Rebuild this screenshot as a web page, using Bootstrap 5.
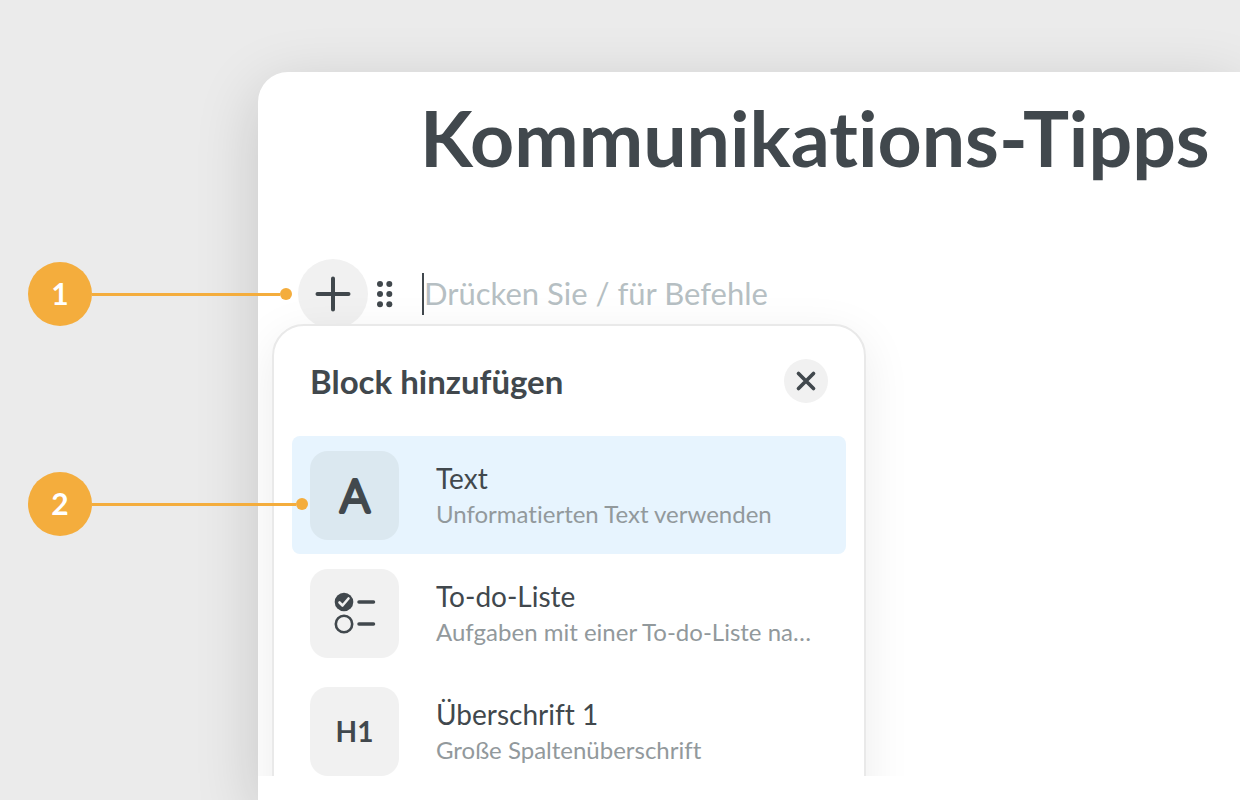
<!DOCTYPE html>
<html lang="de">
<head>
<meta charset="utf-8">
<meta name="viewport" content="width=device-width, initial-scale=1">
<title>Kommunikations-Tipps</title>
<link href="https://cdn.jsdelivr.net/npm/bootstrap@5.3.0/dist/css/bootstrap.min.css" rel="stylesheet">
<style>
  :root { --ink: #41484d; --muted: #92999c; --soft: #f1f1f1; --accent: #f4ad3d; }
  body { background: #ebebeb; color: var(--ink); font-family: Lato, "Liberation Sans", sans-serif; }
  body, button, input { font-variant-ligatures: none; }
  .stage { min-height: 100vh; padding: 72px 0 0 258px; }
  .sheet { min-height: calc(100vh - 72px); border-radius: 30px 0 0 0; box-shadow: 0 16px 64px rgba(0, 0, 0, .16); }
  .editor { height: calc(100vh - 96px); padding-top: 19px; border-radius: 30px 0 0 0; }
  .doc-title { font-size: 77px; line-height: 92px; padding-left: 162px; margin-bottom: 76px; }
  .block-row { padding-left: 40px; }
  .round-btn { border: 0; background: var(--soft); color: var(--ink); }
  .add-btn { width: 70px; height: 70px; }
  .drag-btn { border: 0; background: none; color: var(--ink); width: 34px; height: 36px; }
  .block-input { height: 42px; margin-left: 20px; padding: 0 0 3px; border: 0; border-left: 2px solid var(--ink); outline: 0; background: none; font-size: 31px; line-height: 38px; }
  .block-input::placeholder { color: #b6bfc3; opacity: 1; }
  .block-menu { top: 65px; left: 14px; width: 594px; padding: 33px 18px; border: 2px solid #e9e9e9; border-radius: 32px; box-shadow: 0 12px 48px rgba(0, 0, 0, .08); }
  .menu-head { padding: 0 18px; margin-bottom: 33px; }
  .menu-title { font-size: 33px; line-height: 44px; }
  .close-btn { width: 44px; height: 44px; }
  .menu-item { height: 118px; padding: 0 18px; gap: 37px; border: 0; border-radius: 8px; background: none; color: var(--ink); }
  .menu-item.current { background: #e7f4fe; }
  .tile { width: 89px; height: 89px; border-radius: 18px; background: var(--soft); font-size: 28px; font-weight: 700; }
  .current .tile { background: #dbe8f0; }
  .item-text { padding-top: 2px; }
  .item-name { font-size: 28px; line-height: 36px; }
  .item-note { font-size: 24px; line-height: 36px; color: var(--muted); }
  .callout { left: 28px; }
  .callout-add { top: 262px; width: 264px; }
  .callout-text { top: 472px; width: 280px; }
  .callout-number { width: 64px; height: 64px; padding-bottom: 2px; background: var(--accent); font-size: 30px; }
  .callout-line { height: 3px; background: var(--accent); }
  .callout-dot { width: 12px; height: 12px; background: var(--accent); }
</style>
</head>
<body>
<div class="stage position-relative overflow-hidden">
  <main class="sheet bg-white">
    <div class="editor overflow-hidden">
      <h1 class="doc-title fw-bold text-nowrap">Kommunikations-Tipps</h1>
      <div class="block-row d-flex align-items-center position-relative">
        <button type="button" class="round-btn add-btn rounded-circle p-0 flex-shrink-0 d-flex align-items-center justify-content-center" aria-label="Block hinzufügen">
          <svg width="36" height="36" viewBox="0 0 36 36" fill="none" stroke="currentColor" stroke-width="4" stroke-linecap="round"><path d="M18 2.5v31M2.5 18h31"/></svg>
        </button>
        <button type="button" class="drag-btn p-0 flex-shrink-0 d-flex align-items-center justify-content-center" aria-label="Block verschieben">
          <svg width="18" height="28" viewBox="0 0 18 28" fill="currentColor"><circle cx="4" cy="4" r="3"/><circle cx="13.300" cy="4" r="3"/><circle cx="4" cy="14" r="3"/><circle cx="13.300" cy="14" r="3"/><circle cx="4" cy="24.300" r="3"/><circle cx="13.300" cy="24.300" r="3"/></svg>
        </button>
        <input type="text" class="block-input flex-grow-1" placeholder="Drücken Sie / für Befehle" aria-label="Blocktext">
        <section class="block-menu position-absolute bg-white" aria-labelledby="menuTitle">
          <div class="menu-head d-flex align-items-center justify-content-between">
            <h2 id="menuTitle" class="menu-title fw-bold mb-0">Block hinzufügen</h2>
            <button type="button" class="round-btn close-btn rounded-circle p-0 d-flex align-items-center justify-content-center" aria-label="Schließen">
              <svg width="22" height="22" viewBox="0 0 22 22" fill="none" stroke="currentColor" stroke-width="3.700" stroke-linecap="round"><path d="M3.500 3.500l15 15M18.500 3.500l-15 15"/></svg>
            </button>
          </div>
          <ul class="list-unstyled mb-0">
            <li><button type="button" class="menu-item current w-100 d-flex align-items-center text-start">
              <span class="tile flex-shrink-0 d-flex align-items-center justify-content-center">
                <svg width="60" height="72" viewBox="0 0 60 72" fill="currentColor" stroke="currentColor" stroke-width="4" stroke-linejoin="round" font-size="45" font-weight="300"><text x="30" y="53" text-anchor="middle">A</text></svg>
              </span>
              <span class="item-text"><span class="item-name d-block">Text</span><span class="item-note d-block text-nowrap">Unformatierten Text verwenden</span></span>
            </button></li>
            <li><button type="button" class="menu-item w-100 d-flex align-items-center text-start">
              <span class="tile flex-shrink-0 d-flex align-items-center justify-content-center">
                <svg width="42" height="42" viewBox="0 0 42 42" fill="none" stroke="currentColor" stroke-width="3.500" stroke-linecap="round" stroke-linejoin="round"><circle cx="10" cy="10" r="9.300" fill="currentColor" stroke="none"/><path d="M5.500 10.500l3 3 6-7" stroke="#f1f1f1" stroke-width="2.600"/><circle cx="10" cy="32" r="8.200" stroke-width="2.600"/><path d="M25 10h14.500M25 32h14.500"/></svg>
              </span>
              <span class="item-text"><span class="item-name d-block">To-do-Liste</span><span class="item-note d-block text-nowrap">Aufgaben mit einer To-do-Liste na…</span></span>
            </button></li>
            <li><button type="button" class="menu-item w-100 d-flex align-items-center text-start">
              <span class="tile flex-shrink-0 d-flex align-items-center justify-content-center">H1</span>
              <span class="item-text"><span class="item-name d-block">Überschrift 1</span><span class="item-note d-block text-nowrap">Große Spaltenüberschrift</span></span>
            </button></li>
          </ul>
        </section>
      </div>
    </div>
  </main>
  <div class="callout callout-add position-absolute d-flex align-items-center">
    <span class="callout-number rounded-circle flex-shrink-0 d-flex align-items-center justify-content-center text-white fw-bold">1</span>
    <span class="callout-line flex-grow-1"></span><span class="callout-dot rounded-circle"></span>
  </div>
  <div class="callout callout-text position-absolute d-flex align-items-center">
    <span class="callout-number rounded-circle flex-shrink-0 d-flex align-items-center justify-content-center text-white fw-bold">2</span>
    <span class="callout-line flex-grow-1"></span><span class="callout-dot rounded-circle"></span>
  </div>
</div>
<script src="https://cdn.jsdelivr.net/npm/bootstrap@5.3.0/dist/js/bootstrap.bundle.min.js"></script>
</body>
</html>
